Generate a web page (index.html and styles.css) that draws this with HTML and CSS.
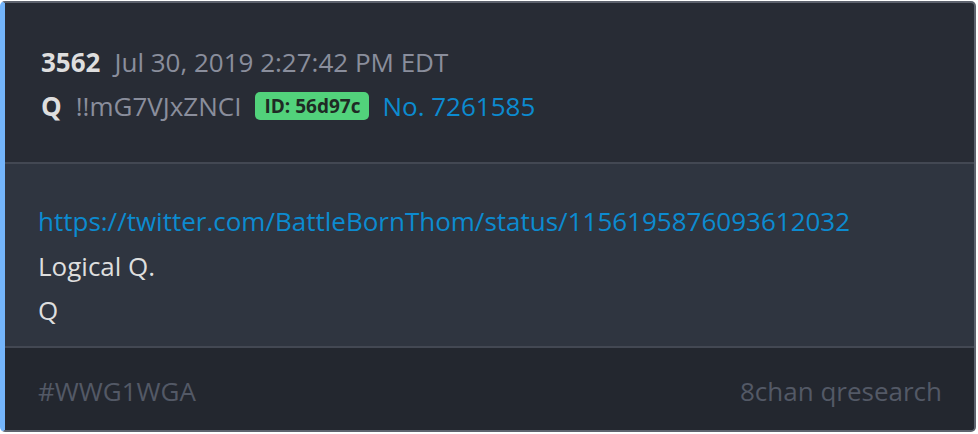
FILE: index.html
```html
<!DOCTYPE html>
<html>
<head>
<meta charset="utf-8">
<link rel="stylesheet" href="styles.css">
</head>
<body>
<article class="card">
  <header class="head">
    <div class="row">
      <span class="num">3562</span>
      <span class="date">Jul 30, 2019 2:27:42 PM EDT</span>
    </div>
    <div class="row">
      <span class="name">Q</span>
      <span class="trip">!!mG7VJxZNCI</span>
      <span class="badge">ID: 56d97c</span>
      <a class="no" href="#">No. 7261585</a>
    </div>
  </header>
  <section class="body">
    <a class="link" href="#">https://twitter.com/BattleBornThom/status/1156195876093612032</a>
    <p class="line">Logical Q.</p>
    <p class="line">Q</p>
  </section>
  <footer class="foot">
    <span>#WWG1WGA</span>
    <span>8chan qresearch</span>
  </footer>
</article>
</body>
</html>
```
FILE: styles.css
```css
html, body {
  margin: 0;
  padding: 0;
  background: #ffffff;
}
body {
  padding: 1px 2px 2px 0;
  font-family: "Open Sans", "Noto Sans", sans-serif;
  font-size: 26px;
}
.card {
  background: #282c35;
  border: 2px solid #5e636e;
  border-left: 5px solid #74b5fb;
  border-radius: 5px;
  overflow: hidden;
  height: 431px;
  box-sizing: border-box;
  display: flex;
  flex-direction: column;
}
.head {
  padding: 37px 33px 0 36px;
  height: 161px;
  box-sizing: border-box;
  border-bottom: 2px solid #434853;
}
.row {
  display: flex;
  align-items: center;
  gap: 14px;
  height: 44px;
}
.num, .name {
  font-weight: 700;
  color: #dedede;
}
.date, .trip {
  color: #8a8e9c;
}
.badge {
  background: #52d27b;
  color: #1f2a24;
  font-weight: 700;
  font-size: 19px;
  padding: 0 9px;
  margin-right: -1px;
  border-radius: 5px;
  line-height: 28px;
}
.no {
  color: #0c8bd0;
  text-decoration: none;
}
.body {
  background: #2f3540;
  padding: 35px 33px 0 33px;
  height: 184px;
  box-sizing: border-box;
  border-bottom: 2px solid #434853;
}
.link {
  display: block;
  color: #0c8bd0;
  text-decoration: none;
  line-height: 45px;
}
.line {
  margin: 0;
  color: #dedede;
  line-height: 44px;
}
.foot {
  flex: 1;
  background: #23272f;
  display: flex;
  justify-content: space-between;
  align-items: center;
  padding: 4px 32px 0 33px;
  color: #535966;
}
```
